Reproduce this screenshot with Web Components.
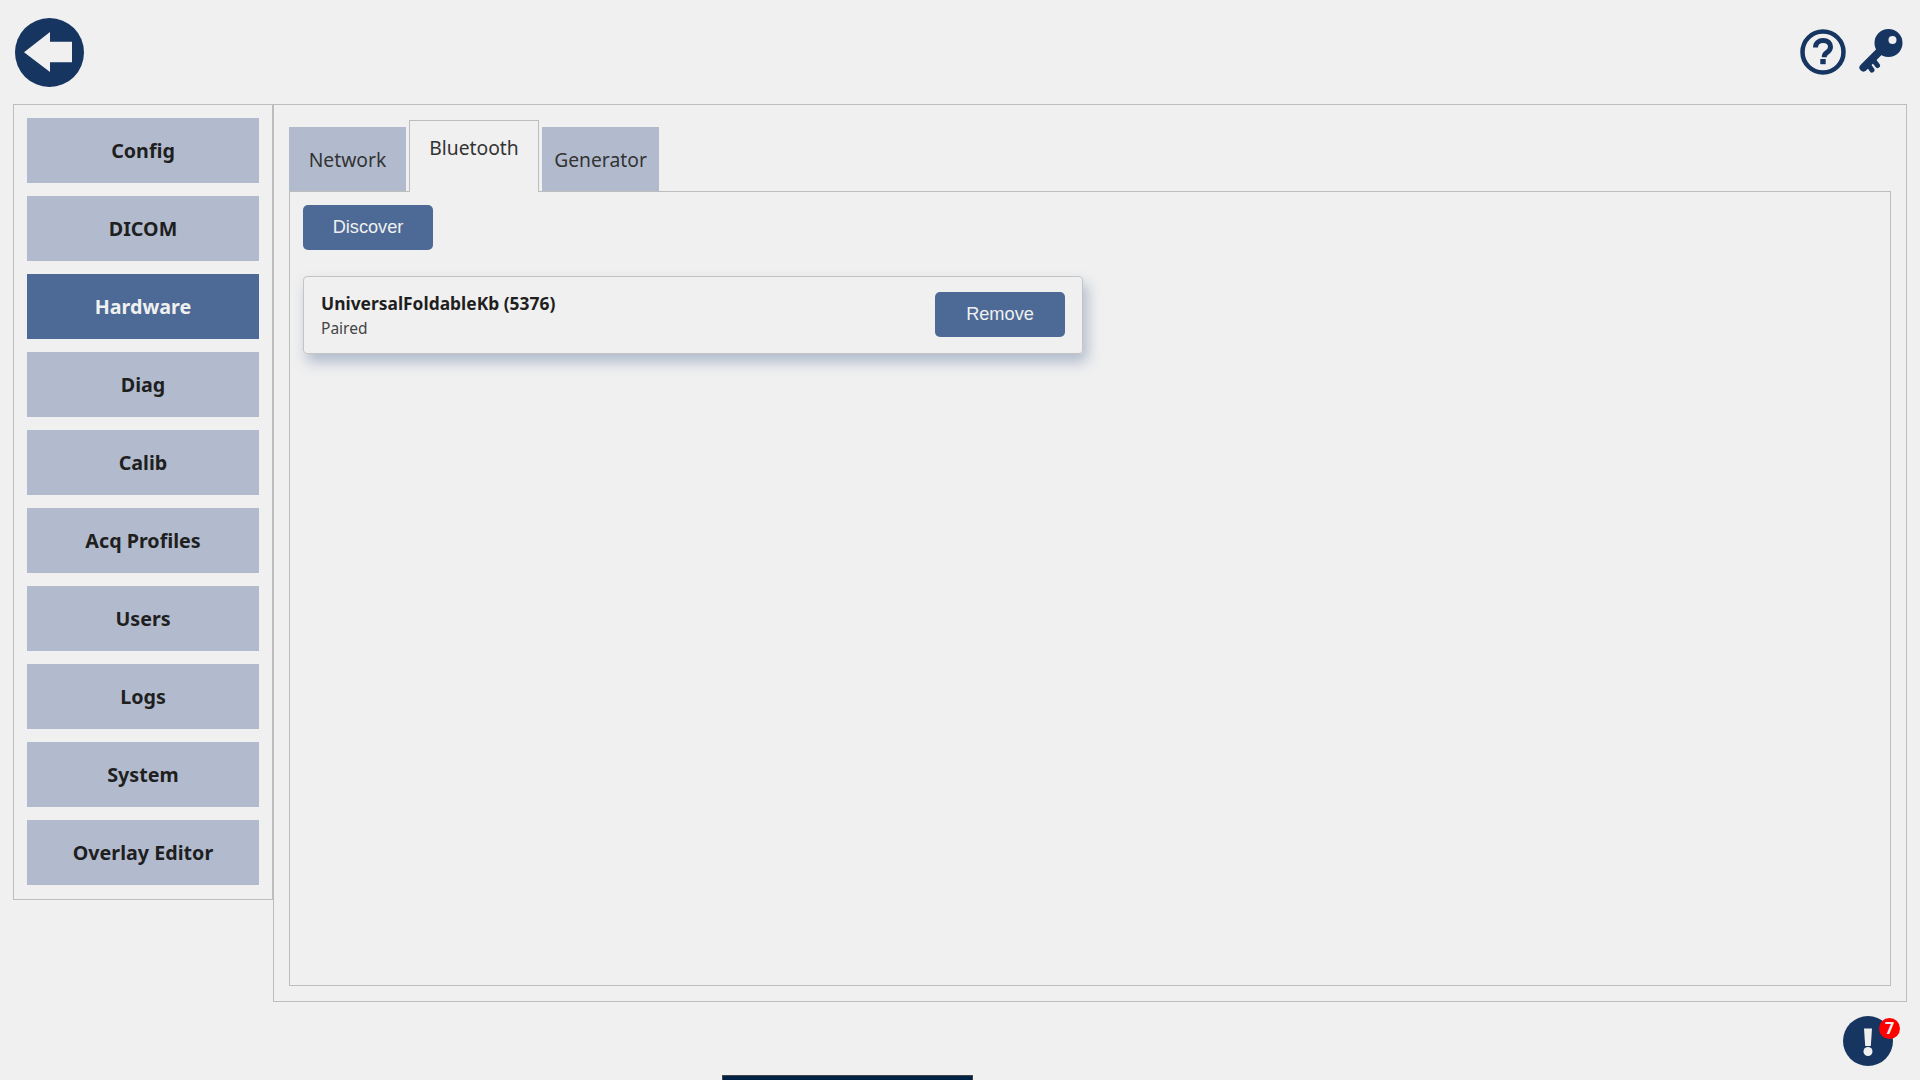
<!DOCTYPE html>
<html>
<head>
<meta charset="utf-8">
<title>Hardware</title>
<style>
  html, body { margin: 0; height: 100%; }
  body {
    background: #f0f0f0;
    color: #1f1f1f;
    font-family: "Noto Sans", "Open Sans", sans-serif;
    overflow: hidden;
  }
</style>
</head>
<body>
<app-shell>
  <top-bar slot="top"></top-bar>
  <side-nav slot="nav">
    <nav-item>Config</nav-item>
    <nav-item>DICOM</nav-item>
    <nav-item active>Hardware</nav-item>
    <nav-item>Diag</nav-item>
    <nav-item>Calib</nav-item>
    <nav-item>Acq Profiles</nav-item>
    <nav-item>Users</nav-item>
    <nav-item>Logs</nav-item>
    <nav-item>System</nav-item>
    <nav-item>Overlay Editor</nav-item>
  </side-nav>
  <tab-panel slot="main">
    <tab-item slot="tabs">Network</tab-item>
    <tab-item slot="tabs" active>Bluetooth</tab-item>
    <tab-item slot="tabs">Generator</tab-item>
    <bt-page>
      <action-button slot="discover">Discover</action-button>
      <device-card slot="devices" name="UniversalFoldableKb (5376)" status="Paired">
        <action-button>Remove</action-button>
      </device-card>
    </bt-page>
  </tab-panel>
  <alert-badge slot="overlay" count="7"></alert-badge>
</app-shell>

<script>
class AppShell extends HTMLElement {
  constructor() {
    super();
    this.attachShadow({ mode: "open" });
    this.shadowRoot.innerHTML = `
      <style>
        :host {
          display: flex;
          flex-direction: column;
          height: 1080px;
          padding: 0 13px 0 13px;
          box-sizing: border-box;
        }
        .body {
          display: flex;
          align-items: flex-start;
        }
        .bar {
          position: absolute;
          left: 722px;
          bottom: 0;
          width: 249px;
          height: 4px;
          background: #002244;
          border: 1px solid #444;
          border-bottom: 0;
        }
      </style>
      <slot name="top"></slot>
      <div class="body">
        <slot name="nav"></slot>
        <slot name="main"></slot>
      </div>
      <slot name="overlay"></slot>
      <div class="bar"></div>
    `;
  }
}

class TopBar extends HTMLElement {
  constructor() {
    super();
    this.attachShadow({ mode: "open" });
    this.shadowRoot.innerHTML = `
      <style>
        :host {
          display: flex;
          justify-content: space-between;
          height: 104px;
          box-sizing: border-box;
          padding: 18px 3px 0 2px;
        }
        .right { display: flex; gap: 13px; padding-top: 11px; }
        svg { display: block; }
      </style>
      <svg width="69" height="69" viewBox="0 0 69 69">
        <circle cx="34.5" cy="34.5" r="34.5" fill="#163560"/>
        <path d="M9 34.300 35 14v9.700h22v20.600H35V54z" fill="#f0f0f0"/>
      </svg>
      <div class="right">
        <svg width="46" height="46" viewBox="0 0 46 46">
          <circle cx="23" cy="23" r="20.500" fill="none" stroke="#163560" stroke-width="4.500"/>
          <path d="M15.500 18.500c0-4.400 3.300-7 7.600-7 4.400 0 7.400 2.600 7.400 6.300 0 3-1.700 4.500-3.700 5.800-1.700 1.100-2.500 1.900-2.500 3.900v.8" fill="none" stroke="#163560" stroke-width="5"/>
          <rect x="20.300" y="30" width="5.400" height="5.200" fill="#163560"/>
        </svg>
        <svg width="45" height="45" viewBox="0 0 45 45">
          <path fill-rule="evenodd" fill="#163560" d="M29.500 0a14 14 0 1 1 0 28a14 14 0 0 1 0-28zM33.500 7a4 4 0 1 0 0 8a4 4 0 0 0 0-8z"/>
          <path d="M22 21 4.500 38.500" stroke="#163560" stroke-width="8" stroke-linecap="round"/>
          <path d="M10.500 37.500 13 41M15.500 32.500 18.500 36.500" stroke="#163560" stroke-width="5" stroke-linecap="round"/>
        </svg>
      </div>
    `;
  }
}

class SideNav extends HTMLElement {
  constructor() {
    super();
    this.attachShadow({ mode: "open" });
    this.shadowRoot.innerHTML = `
      <style>
        :host {
          display: flex;
          flex-direction: column;
          gap: 13px;
          width: 260px;
          box-sizing: border-box;
          padding: 13px 13px 14px;
          border: 1px solid #bdbdbd;
          flex: none;
        }
      </style>
      <slot></slot>
    `;
  }
}

class NavItem extends HTMLElement {
  constructor() {
    super();
    this.attachShadow({ mode: "open" });
    this.shadowRoot.innerHTML = `
      <style>
        :host {
          display: flex;
          align-items: center;
          justify-content: center;
          height: 65px;
          background: #b2bbce;
          color: #1f1f1f;
          font-size: 19.700px;
          font-weight: 700;
        }
        :host([active]) {
          background: #4d6a96;
          color: #f0f0f0;
        }
      </style>
      <slot></slot>
    `;
  }
}

class TabPanel extends HTMLElement {
  constructor() {
    super();
    this.attachShadow({ mode: "open" });
    this.shadowRoot.innerHTML = `
      <style>
        :host {
          display: block;
          flex: 1;
          height: 898px;
          box-sizing: border-box;
          padding: 15px;
          border: 1px solid #bdbdbd;
        }
        .tabs {
          display: flex;
          align-items: flex-end;
          gap: 3px;
          height: 72px;
        }
        .content {
          height: 795px;
          box-sizing: border-box;
          border: 1px solid #bdbdbd;
          margin-top: -1px;
        }
      </style>
      <div class="tabs"><slot name="tabs"></slot></div>
      <div class="content"><slot></slot></div>
    `;
  }
}

class TabItem extends HTMLElement {
  constructor() {
    super();
    this.attachShadow({ mode: "open" });
    this.shadowRoot.innerHTML = `
      <style>
        :host {
          display: flex;
          align-items: center;
          justify-content: center;
          width: 117px;
          height: 65px;
          box-sizing: border-box;
          background: #b2bbce;
          border-bottom: 1px solid #bdbdbd;
          font-size: 19.300px;
          color: #333;
          position: relative;
          z-index: 1;
        }
        :host([active]) {
          width: 130px;
          height: 72px;
          background: #f0f0f0;
          border: 1px solid #bdbdbd;
          border-bottom: 0;
          padding-bottom: 19px;
        }
      </style>
      <slot></slot>
    `;
  }
}

class BtPage extends HTMLElement {
  constructor() {
    super();
    this.attachShadow({ mode: "open" });
    this.shadowRoot.innerHTML = `
      <style>
        :host {
          display: flex;
          flex-direction: column;
          align-items: flex-start;
          gap: 26px;
          padding: 13px;
        }
      </style>
      <slot name="discover"></slot>
      <slot name="devices"></slot>
    `;
  }
}

class ActionButton extends HTMLElement {
  constructor() {
    super();
    this.attachShadow({ mode: "open" });
    this.shadowRoot.innerHTML = `
      <style>
        :host {
          display: inline-flex;
          align-items: center;
          justify-content: center;
          width: 130px;
          height: 45px;
          background: #4d6a96;
          color: #f0f0f0;
          border-radius: 5px;
          font-family: "Liberation Sans", Arial, sans-serif;
          font-size: 18.200px;
        }
      </style>
      <slot></slot>
    `;
  }
}

class DeviceCard extends HTMLElement {
  constructor() {
    super();
    this.attachShadow({ mode: "open" });
    this.shadowRoot.innerHTML = `
      <style>
        :host {
          display: flex;
          align-items: center;
          justify-content: space-between;
          width: 780px;
          height: 78px;
          box-sizing: border-box;
          padding: 0 17px 1px;
          border: 1px solid #c4c4c4;
          border-radius: 4px;
          box-shadow: 4px 8px 14px rgba(77, 106, 150, 0.4);
        }
        .name { font-size: 17.400px; font-weight: 700; color: #1f1f1f; line-height: 24px; }
        .status { font-size: 15.500px; color: #444; line-height: 20px; margin-top: 3px; }
      </style>
      <div>
        <div class="name"></div>
        <div class="status"></div>
      </div>
      <slot></slot>
    `;
    this.shadowRoot.querySelector(".name").textContent = this.getAttribute("name");
    this.shadowRoot.querySelector(".status").textContent = this.getAttribute("status");
  }
}

class AlertBadge extends HTMLElement {
  constructor() {
    super();
    this.attachShadow({ mode: "open" });
    this.shadowRoot.innerHTML = `
      <style>
        :host {
          position: absolute;
          left: 1843px;
          top: 1016px;
          width: 50px;
          height: 50px;
          display: block;
        }
        svg { display: block; }
        .count {
          position: absolute;
          left: 36px;
          top: 2px;
          width: 21px;
          height: 21px;
          border-radius: 50%;
          background: #fe0000;
          color: #f0f0f0;
          font: 700 16px/21px "Noto Sans", sans-serif;
          text-align: center;
        }
      </style>
      <svg width="50" height="50" viewBox="0 0 50 50">
        <circle cx="25" cy="25" r="25" fill="#163560"/>
        <path d="M21 12.500h8L27.800 30h-5.600z" fill="#f0f0f0"/>
        <circle cx="25" cy="35.500" r="4.500" fill="#f0f0f0"/>
      </svg>
      <div class="count"></div>
    `;
    this.shadowRoot.querySelector(".count").textContent = this.getAttribute("count");
  }
}

customElements.define("app-shell", AppShell);
customElements.define("top-bar", TopBar);
customElements.define("side-nav", SideNav);
customElements.define("nav-item", NavItem);
customElements.define("tab-panel", TabPanel);
customElements.define("tab-item", TabItem);
customElements.define("bt-page", BtPage);
customElements.define("action-button", ActionButton);
customElements.define("device-card", DeviceCard);
customElements.define("alert-badge", AlertBadge);
</script>
</body>
</html>
